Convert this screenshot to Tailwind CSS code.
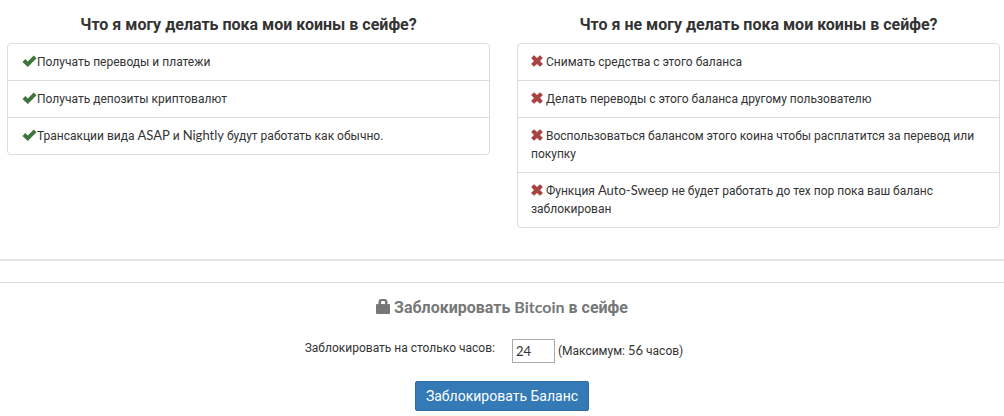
<!DOCTYPE html>
<html lang="ru">
<head>
    <meta charset="UTF-8">
    <meta name="viewport" content="width=device-width, initial-scale=1.0">
    <script src="https://cdn.jsdelivr.net/npm/@tailwindcss/browser@4"></script>
    <title>Сейф</title>
</head>
<body class="bg-white font-[Roboto,'Liberation_Sans',sans-serif] text-xs leading-[18px] text-[#333]">

    <!-- Icons -->
    <svg class="hidden">
        <symbol id="check" viewBox="0 0 14 12"><path d="M0 6.9 2.8 4.1l2.5 2.4L11.2.6 14 3.3 5.3 11.9z"/></symbol>
        <symbol id="cross" viewBox="0 0 12 12"><path d="M3 .2 6 3.1 9 .2 11.9 3 9 6l2.9 3L9 11.8 6 8.9 3 11.8.1 9 3 6 .1 3z"/></symbol>
        <symbol id="lock" viewBox="0 0 14 15"><path fill-rule="evenodd" d="M2.5 5V3.2Q2.5 0 5.5 0h3q3 0 3 3.2V5H13q1 0 1 1v8q0 1-1 1H1q-1 0-1-1V6q0-1 1-1zM5 5h4V3.4Q9 2 7.9 2H6.1Q5 2 5 3.4z"/></symbol>
    </svg>

    <!-- Rules -->
    <section class="grid grid-cols-2 gap-[27px] items-start pl-[7px] pr-1 pt-[15px]">
        <div>
            <h2 class="text-center text-base leading-5 font-bold mb-2">Что я могу делать пока мои коины в сейфе?</h2>
            <ul class="border border-[#ddd] rounded divide-y divide-[#ddd]">
                <li class="px-[14px] py-[9px]"><svg class="inline-block align-[-1px] w-[15px] h-3 fill-[#3c763d]"><use href="#check"/></svg>Получать переводы и платежи</li>
                <li class="px-[14px] py-[9px]"><svg class="inline-block align-[-1px] w-[15px] h-3 fill-[#3c763d]"><use href="#check"/></svg>Получать депозиты криптовалют</li>
                <li class="px-[14px] py-[9px]"><svg class="inline-block align-[-1px] w-[15px] h-3 fill-[#3c763d]"><use href="#check"/></svg>Трансакции вида <span class="font-[Lato] text-[13px] leading-none">ASAP</span> и <span class="font-[Lato] text-[13px] leading-none">Nightly</span> будут работать как обычно.</li>
            </ul>
        </div>
        <div>
            <h2 class="text-center text-base leading-5 font-bold mb-2">Что я не могу делать пока мои коины в сейфе?</h2>
            <ul class="border border-[#ddd] rounded divide-y divide-[#ddd]">
                <li class="px-[13px] py-[9px]"><svg class="inline-block align-[-1px] w-3 h-3 fill-[#a94442]"><use href="#cross"/></svg> Снимать средства с этого баланса</li>
                <li class="px-[13px] py-[9px]"><svg class="inline-block align-[-1px] w-3 h-3 fill-[#a94442]"><use href="#cross"/></svg> Делать переводы с этого баланса другому пользователю</li>
                <li class="px-[13px] py-[9px]"><svg class="inline-block align-[-1px] w-3 h-3 fill-[#a94442]"><use href="#cross"/></svg> Воспользоваться балансом этого коина чтобы расплатится за перевод или покупку</li>
                <li class="px-[13px] py-[9px]"><svg class="inline-block align-[-1px] w-3 h-3 fill-[#a94442]"><use href="#cross"/></svg> Функция <span class="font-[Lato] text-[13px] leading-none">Auto-Sweep</span> не будет работать до тех пор пока ваш баланс заблокирован</li>
            </ul>
        </div>
    </section>

    <hr class="mt-[31px] border-t-2 border-[#e3e3e3]">
    <hr class="mt-[21px] border-[#ddd]">

    <!-- Lock form -->
    <form action="#" method="POST" class="flex flex-col items-center pt-[15px]">
        <h2 class="text-base leading-5 font-bold text-[#777]"><svg class="inline-block align-[-1px] w-[14px] h-[15px] fill-[#777]"><use href="#lock"/></svg> Заблокировать <span class="font-[Lato] leading-none">Bitcoin</span> в сейфе</h2>
        <div class="flex mt-[21px] mr-4">
            <label for="hours" class="mr-[17px]">Заблокировать на столько часов:</label>
            <div class="flex items-center">
                <input type="text" id="hours" name="hours" value="24" class="w-[43px] h-6 px-[3px] border border-[#aaa] font-[Lato] text-[13px] mr-[3px]">
                <span>(Максимум: <span class="font-[Lato] text-[13px] leading-none">56</span> часов)</span>
            </div>
        </div>
        <button type="submit" class="mt-[18px] h-[30px] px-[10px] rounded-xs border border-[#2e6da4] bg-[#337ab7] text-white text-sm">Заблокировать Баланс</button>
    </form>

</body>
</html>
